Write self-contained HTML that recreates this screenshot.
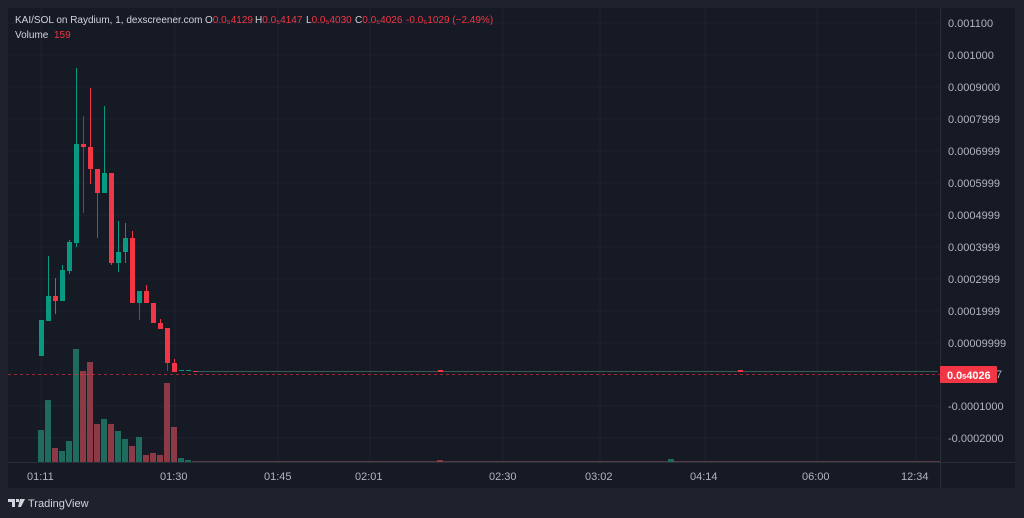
<!DOCTYPE html>
<html><head><meta charset="utf-8"><style>
body{margin:0;width:1024px;height:518px;background:#1f222c;overflow:hidden;font-family:"Liberation Sans",sans-serif}
svg{position:absolute;left:0;top:0}
</style></head><body>
<svg width="1024" height="518" xmlns="http://www.w3.org/2000/svg">
<rect x="8" y="8" width="1007" height="480" fill="#161a25"/>
<g stroke="#1f232e" stroke-width="1">
<line x1="8" x2="940" y1="23" y2="23"/><line x1="8" x2="940" y1="55" y2="55"/><line x1="8" x2="940" y1="87" y2="87"/><line x1="8" x2="940" y1="119" y2="119"/><line x1="8" x2="940" y1="151" y2="151"/><line x1="8" x2="940" y1="183" y2="183"/><line x1="8" x2="940" y1="215" y2="215"/><line x1="8" x2="940" y1="247" y2="247"/><line x1="8" x2="940" y1="279" y2="279"/><line x1="8" x2="940" y1="311" y2="311"/><line x1="8" x2="940" y1="343" y2="343"/><line x1="8" x2="940" y1="406" y2="406"/><line x1="8" x2="940" y1="438" y2="438"/>
<line x1="41" x2="41" y1="8" y2="462"/><line x1="175" x2="175" y1="8" y2="462"/><line x1="278" x2="278" y1="8" y2="462"/><line x1="370" x2="370" y1="8" y2="462"/><line x1="503" x2="503" y1="8" y2="462"/><line x1="600" x2="600" y1="8" y2="462"/><line x1="705" x2="705" y1="8" y2="462"/><line x1="817" x2="817" y1="8" y2="462"/><line x1="916" x2="916" y1="8" y2="462"/>
</g>
<line x1="8" x2="1015" y1="462.5" y2="462.5" stroke="#2a2e39"/>
<line x1="940.5" x2="940.5" y1="8" y2="488" stroke="#2a2e39"/>
<g>
<rect x="38" y="430" width="6" height="32" fill="#1f6b5e"/><rect x="45" y="400" width="6" height="62" fill="#1f6b5e"/><rect x="52" y="448" width="6" height="14" fill="#8c3a45"/><rect x="59" y="451" width="6" height="11" fill="#1f6b5e"/><rect x="66" y="441" width="6" height="21" fill="#1f6b5e"/><rect x="73" y="349" width="6" height="113" fill="#1f6b5e"/><rect x="80" y="371" width="6" height="91" fill="#8c3a45"/><rect x="87" y="362" width="6" height="100" fill="#8c3a45"/><rect x="94" y="424" width="6" height="38" fill="#8c3a45"/><rect x="101" y="419" width="6" height="43" fill="#1f6b5e"/><rect x="108" y="424" width="6" height="38" fill="#8c3a45"/><rect x="115" y="431" width="6" height="31" fill="#1f6b5e"/><rect x="122" y="439" width="6" height="23" fill="#1f6b5e"/><rect x="129" y="446" width="6" height="16" fill="#8c3a45"/><rect x="136" y="437" width="6" height="25" fill="#1f6b5e"/><rect x="143" y="455" width="6" height="7" fill="#8c3a45"/><rect x="150" y="453" width="6" height="9" fill="#8c3a45"/><rect x="157" y="455" width="6" height="7" fill="#8c3a45"/><rect x="164" y="383" width="6" height="79" fill="#8c3a45"/><rect x="171" y="427" width="6" height="35" fill="#8c3a45"/><rect x="178" y="458" width="6" height="4" fill="#1f6b5e"/><rect x="185" y="460" width="6" height="2" fill="#1f6b5e"/>
<rect x="192" y="461" width="748" height="1" fill="#5a3a45"/>
<rect x="437" y="460" width="6" height="2" fill="#8c3a45"/><rect x="668" y="459" width="6" height="3" fill="#1f6b5e"/>
</g>
<g stroke-width="1">
<line x1="48.5" x2="48.5" y1="256" y2="321" stroke="#089981"/>
<line x1="55.5" x2="55.5" y1="278" y2="314" stroke="#f23645"/>
<line x1="62.5" x2="62.5" y1="265" y2="301" stroke="#089981"/>
<line x1="69.5" x2="69.5" y1="240" y2="274" stroke="#089981"/>
<line x1="76.5" x2="76.5" y1="68" y2="247" stroke="#089981"/>
<line x1="83.5" x2="83.5" y1="116" y2="213" stroke="#a33040"/>
<line x1="90.5" x2="90.5" y1="88" y2="184" stroke="#f23645"/>
<line x1="97.5" x2="97.5" y1="169" y2="238" stroke="#c2303e"/>
<line x1="104.5" x2="104.5" y1="106" y2="193" stroke="#089981"/>
<line x1="111.5" x2="111.5" y1="173" y2="265" stroke="#f23645"/>
<line x1="118.5" x2="118.5" y1="221" y2="272" stroke="#089981"/>
<line x1="125.5" x2="125.5" y1="223" y2="263" stroke="#089981"/>
<line x1="132.5" x2="132.5" y1="231" y2="303" stroke="#f23645"/>
<line x1="139.5" x2="139.5" y1="291" y2="320" stroke="#087a68"/>
<line x1="146.5" x2="146.5" y1="285" y2="303" stroke="#f23645"/>
<line x1="160.5" x2="160.5" y1="319" y2="329" stroke="#f23645"/>
<line x1="167.5" x2="167.5" y1="328" y2="371" stroke="#a33040"/>
<line x1="174.5" x2="174.5" y1="359" y2="372" stroke="#f23645"/>
</g>
<g>
<rect x="39" y="320" width="5" height="36" fill="#089981"/>
<rect x="46" y="296" width="5" height="25" fill="#089981"/>
<rect x="53" y="296" width="5" height="5" fill="#f23645"/>
<rect x="60" y="270" width="5" height="31" fill="#089981"/>
<rect x="67" y="242" width="5" height="29" fill="#089981"/>
<rect x="74" y="144" width="5" height="99" fill="#089981"/>
<rect x="81" y="144" width="5" height="3" fill="#f23645"/>
<rect x="88" y="147" width="5" height="22" fill="#f23645"/>
<rect x="95" y="169" width="5" height="24" fill="#f23645"/>
<rect x="102" y="173" width="5" height="20" fill="#089981"/>
<rect x="109" y="173" width="5" height="90" fill="#f23645"/>
<rect x="116" y="252" width="5" height="11" fill="#089981"/>
<rect x="123" y="238" width="5" height="14" fill="#089981"/>
<rect x="130" y="238" width="5" height="65" fill="#f23645"/>
<rect x="137" y="291" width="5" height="12" fill="#089981"/>
<rect x="144" y="291" width="5" height="12" fill="#f23645"/>
<rect x="151" y="303" width="5" height="20" fill="#f23645"/>
<rect x="158" y="323" width="5" height="6" fill="#f23645"/>
<rect x="165" y="328" width="5" height="35" fill="#f23645"/>
<rect x="172" y="363" width="5" height="9" fill="#f23645"/>
<rect x="179" y="370" width="5" height="1" fill="#089981"/><rect x="186" y="370" width="5" height="1" fill="#089981"/><rect x="193" y="371" width="5" height="1" fill="#f23645"/>
<rect x="198" y="371" width="740" height="1" fill="#3a5a55"/>
<rect x="438" y="370" width="5" height="2" fill="#f23645"/><rect x="738" y="370" width="5" height="2" fill="#f23645"/>
</g>
<line x1="8" x2="940" y1="374.5" y2="374.5" stroke="#f23645" stroke-opacity="0.6" stroke-dasharray="3 3"/>
<g font-size="11" fill="#b2b5be">
<text x="948" y="27">0.001100</text><text x="948" y="59">0.001000</text><text x="948" y="91">0.0009000</text><text x="948" y="123">0.0007999</text><text x="948" y="155">0.0006999</text><text x="948" y="187">0.0005999</text><text x="948" y="219">0.0004999</text><text x="948" y="251">0.0003999</text><text x="948" y="283">0.0002999</text><text x="948" y="315">0.0001999</text><text x="948" y="347">0.00009999</text><text x="996" y="378">7</text><text x="948" y="410">-0.0001000</text><text x="948" y="442">-0.0002000</text>
<text x="27" y="480">01:11</text><text x="160" y="480">01:30</text><text x="264" y="480">01:45</text><text x="355" y="480">02:01</text><text x="489" y="480">02:30</text><text x="585" y="480">03:02</text><text x="690" y="480">04:14</text><text x="802" y="480">06:00</text><text x="901" y="480">12:34</text>
</g>
<rect x="940" y="366" width="57" height="17" rx="1" fill="#f23645"/>
<text x="947" y="379" font-size="11" fill="#fff" font-weight="bold">0.0<tspan font-size="7">5</tspan>4026</text>
<g font-size="10" fill="#d1d4dc">
<text x="15" y="23">KAI/SOL on Raydium, 1, dexscreener.com</text>
<text x="205" y="23">O<tspan fill="#f23645">0.0₅4129</tspan></text>
<text x="255" y="23">H<tspan fill="#f23645">0.0₅4147</tspan></text>
<text x="306" y="23">L<tspan fill="#f23645">0.0₅4030</tspan></text>
<text x="355" y="23">C<tspan fill="#f23645">0.0₅4026</tspan></text>
<text x="406" y="23" fill="#f23645">-0.0₆1029 (−2.49%)</text>
<text x="15" y="38">Volume</text>
<text x="54" y="38" fill="#f23645">159</text>
</g>
<g fill="#d1d4dc">
<path d="M8 499h7v8h-3v-5h-4z M16 499h3v3h-3z M20 499h5l-4 8h-3z"/>
<text x="28" y="507" font-size="11">TradingView</text>
</g>
</svg>
</body></html>
